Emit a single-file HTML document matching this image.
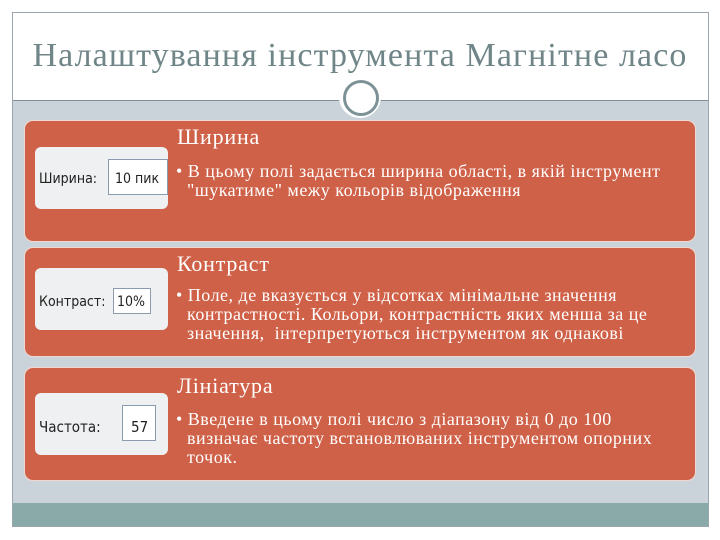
<!DOCTYPE html><html><head><meta charset="utf-8"><style>
body{margin:0;width:720px;height:540px;background:#fff;position:relative;overflow:hidden;font-family:"Liberation Serif",serif}
.frame{position:absolute;left:12px;top:12px;width:697px;height:515px;border:1px solid #9aa8ad;box-sizing:border-box;background:#fff}
.gray{position:absolute;left:13px;top:101px;width:695px;height:402px;background:#c9d3d9}
.line{position:absolute;left:13px;top:100px;width:695px;height:1px;background:#7f8f94}
.teal{position:absolute;left:13px;top:503px;width:695px;height:23px;background:#8aa9a9}
h1{position:absolute;left:0;width:720px;top:37px;margin:0;text-align:center;font-weight:normal;font-size:34px;color:#6f8587;letter-spacing:1.1px;white-space:nowrap}
.circ{position:absolute;left:339px;top:76px;width:42px;height:42px;border-radius:50%;background:#fff}
.circ2{position:absolute;left:343px;top:80px;width:30px;height:30px;border-radius:50%;border:3px solid #7d9296}
.box{position:absolute;left:24px;width:672px;background:#cf6148;border-radius:9px;border:1px solid #f0d8d0;box-sizing:border-box}
.th{position:absolute;left:35px;width:133px;background:#eef0f1;border-radius:6px;font-family:"DejaVu Sans Condensed","Liberation Sans",sans-serif;font-size:14px;color:#222}
.th span{position:absolute}
.inp{position:absolute;background:#fff;border:1px solid #8c9cb0}
.t{position:absolute;left:177px;color:#fff;font-size:22px;letter-spacing:0.8px}
.b{position:absolute;left:176px;color:#fff;font-size:18px;letter-spacing:0.5px;line-height:19px;width:520px;white-space:nowrap}
.b div{padding-left:11px;text-indent:-11px}
</style></head><body>
<div class="frame"></div>
<div class="gray"></div><div class="line"></div><div class="teal"></div>
<h1>Налаштування інструмента Магнітне ласо</h1>
<div class="circ"></div><div class="circ2"></div>

<div class="box" style="top:120px;height:122px"></div>
<div class="th" style="top:147px;height:62px"><span style="left:4px;top:24px">Ширина:</span><div class="inp" style="left:73px;top:12px;width:58px;height:34px"></div><span style="left:80px;top:24px">10 пик</span></div>
<div class="t" style="top:124px">Ширина</div>
<div class="b" style="top:162px"><div>• В цьому полі задається ширина області, в якій інструмент<br>"шукатиме" межу кольорів відображення</div></div>

<div class="box" style="top:247px;height:110px"></div>
<div class="th" style="top:268px;height:62px"><span style="left:4px;top:26px">Контраст:</span><div class="inp" style="left:78px;top:20px;width:36px;height:24px"></div><span style="left:82px;top:26px">10%</span></div>
<div class="t" style="top:251px">Контраст</div>
<div class="b" style="top:286px"><div>• Поле, де вказується у відсотках мінімальне значення<br>контрастності. Кольори, контрастність яких менша за це<br>значення, &nbsp;інтерпретуються інструментом як однакові</div></div>

<div class="box" style="top:367px;height:114px"></div>
<div class="th" style="top:393px;height:62px"><span style="left:4px;top:25px;font-size:15px">Частота:</span><div class="inp" style="left:87px;top:12px;width:32px;height:34px"></div><span style="left:96px;top:25px;font-size:15px">57</span></div>
<div class="t" style="top:373px">Лініатура</div>
<div class="b" style="top:410px"><div>• Введене в цьому полі число з діапазону від 0 до 100<br>визначає частоту встановлюваних інструментом опорних<br>точок.</div></div>
</body></html>
